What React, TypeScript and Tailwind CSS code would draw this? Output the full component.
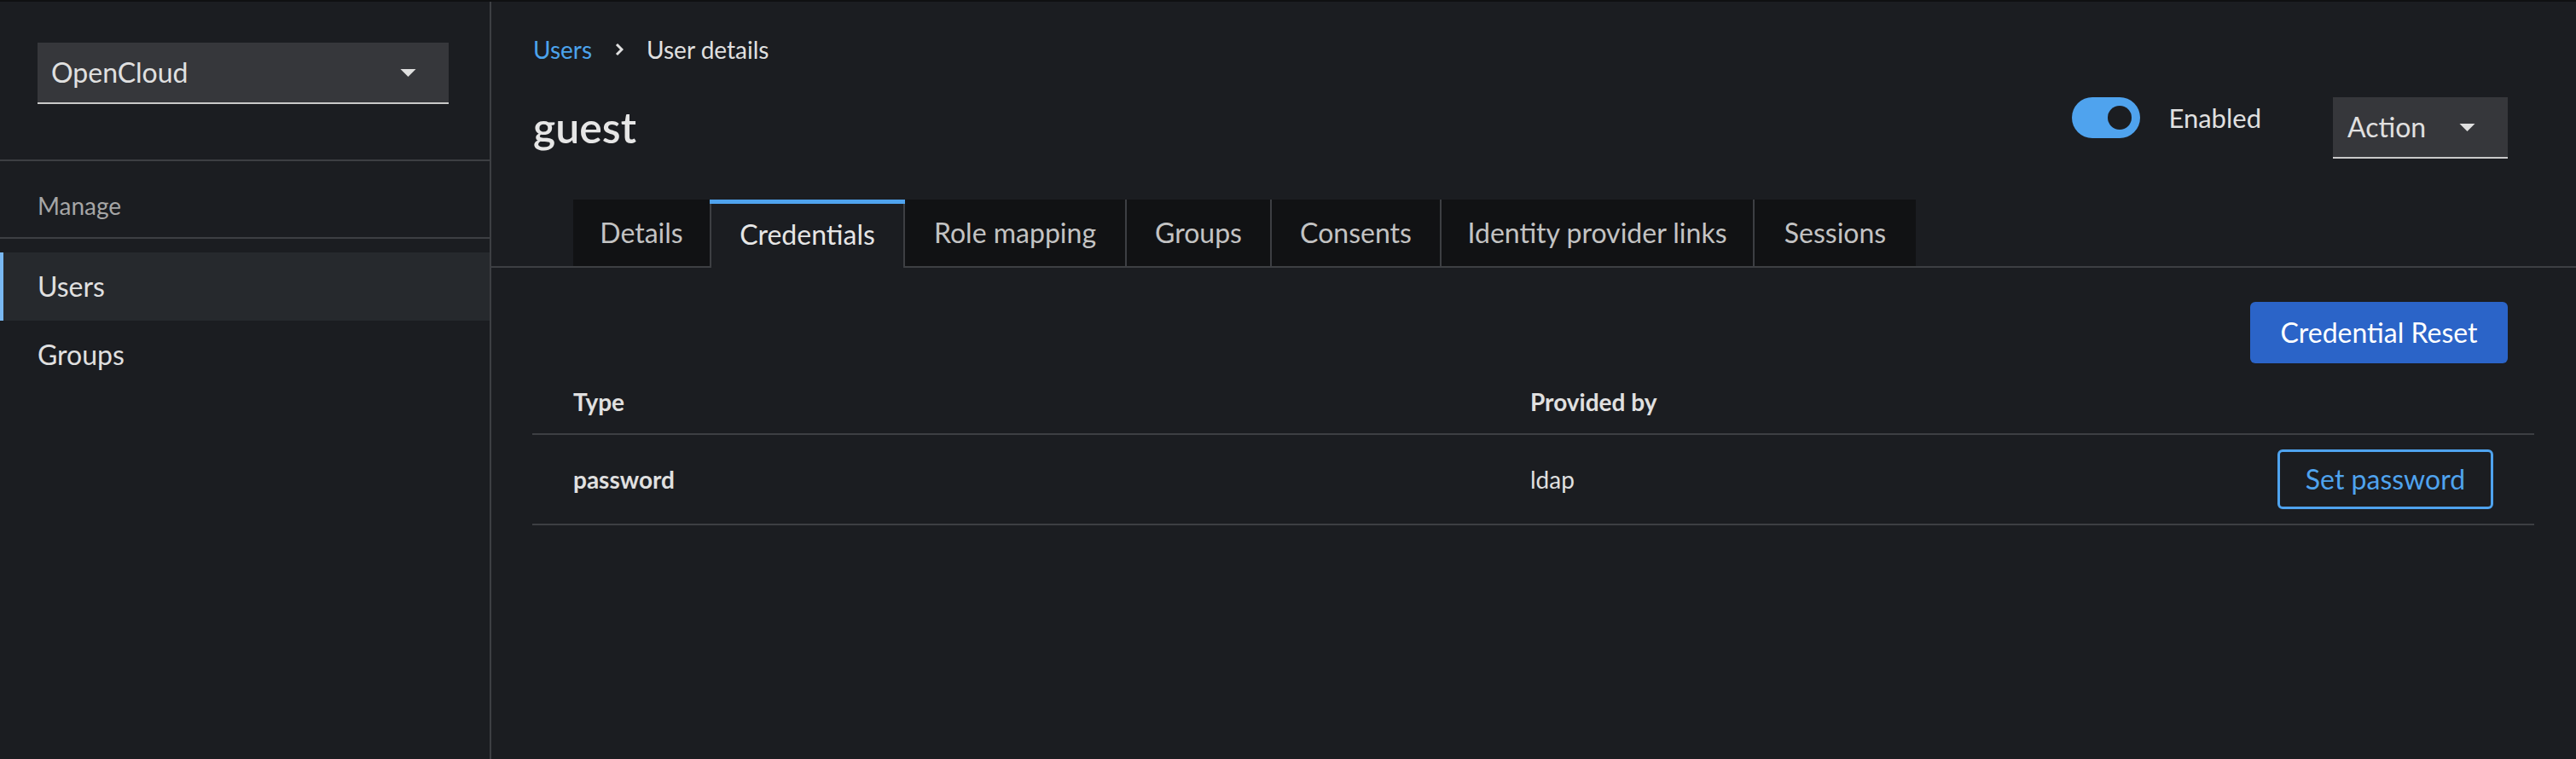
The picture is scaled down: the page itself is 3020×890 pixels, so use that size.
import React from 'react';

const CaretDown: React.FC<{ className?: string }> = ({ className }) => (
  <svg className={className} viewBox="0 0 20 10" fill="currentColor">
    <path d="M0 0 H20 L10 10 Z" />
  </svg>
);

const Sidebar: React.FC = () => (
  <aside className="w-[576px] shrink-0 border-r-2 border-[#3d3f43]">
    {/* realm picker */}
    <div className="pl-[44px] pt-[48px] pb-[65px]">
      <div className="flex h-[72px] w-[482px] items-center justify-between border-b-2 border-[#c9c9c9] bg-[#36373b] pl-4 pr-[38px] text-[32px]">
        <span>OpenCloud</span>
        <CaretDown className="h-[9px] w-[19px] text-[#e0e0e0]" />
      </div>
    </div>
    <div className="border-t-2 border-[#3d3f43] pl-[44px] pt-[32px] pb-[17px] text-[28px] leading-[40px] text-[#a6a6a6]">
      Manage
    </div>
    <nav className="border-t-2 border-[#3d3f43] pt-[16px] text-[32px]">
      <div className="flex h-[80px] items-center border-l-4 border-[#79b8f2] bg-[#26292d] pl-[40px]">
        Users
      </div>
      <div className="flex h-[80px] items-center border-l-4 border-transparent pl-[40px]">
        Groups
      </div>
    </nav>
  </aside>
);

const tabs = [
  { name: 'Details', cls: 'w-[160px]' },
  { name: 'Credentials', cls: 'w-[229px]', active: true },
  { name: 'Role mapping', cls: 'w-[258px]' },
  { name: 'Groups', cls: 'w-[170px] border-l-2' },
  { name: 'Consents', cls: 'w-[199px] border-l-2' },
  { name: 'Identity provider links', cls: 'w-[367px] border-l-2' },
  { name: 'Sessions', cls: 'w-[191px] border-l-2' },
];

const Tabs: React.FC = () => (
  <div className="flex border-b-2 border-[#3d3f43] pl-[96px] text-[32px]">
    {tabs.map((t) =>
      t.active ? (
        <div key={t.name} className={`-mb-[2px] flex h-[80px] flex-col ${t.cls}`}>
          <div className="h-[5px] bg-[#4fa3ee]" />
          <div className="flex flex-1 items-center justify-center border-x-2 border-[#3d3f43] bg-[#1b1d21] pb-[3px] text-[#e6e6e6]">
            {t.name}
          </div>
        </div>
      ) : (
        <div
          key={t.name}
          className={`flex h-[78px] items-center justify-center border-[#3d3f43] bg-[#111214] text-[#c3c3c3] ${t.cls}`}
        >
          {t.name}
        </div>
      )
    )}
  </div>
);

export default function App() {
  return (
    <div className="flex h-[890px] w-full border-t-2 border-[#0f1012] bg-[#1b1d21] font-['Lato',sans-serif] text-[#e0e0e0]">
      <Sidebar />
      <main className="min-w-0 flex-1">
        {/* header */}
        <div className="flex h-[232px] items-start justify-between pl-[49px] pr-[80px] pt-[36px]">
          <div>
            <div className="flex items-center text-[28px] leading-[40px]">
              <span className="text-[#4ca3ec]">Users</span>
              <svg className="mx-[27px] h-[16px] w-[10px]" viewBox="0 0 10 16" fill="none" stroke="#e0e0e0" strokeWidth="3">
                <path d="M2 2 L8 8 L2 14" />
              </svg>
              <span>User details</span>
            </div>
            <h1 className="mt-[43px] text-[50px] font-semibold leading-[56px] text-[#e6e6e6]">guest</h1>
          </div>
          <div className="mt-[76px] flex items-start">
            <div className="flex h-[48px] items-center">
              <div className="flex h-[48px] w-[80px] items-center justify-end rounded-full bg-[#4fa3ee] pr-[10px]">
                <div className="h-[28px] w-[28px] rounded-full bg-[#1b1d21]" />
              </div>
              <span className="ml-[33px] text-[31px]">Enabled</span>
            </div>
            <div className="ml-[84px] flex h-[72px] w-[205px] items-center justify-between border-b-2 border-[#c9c9c9] bg-[#36373b] pl-[17px] pr-[38px] text-[32px]">
              <span>Action</span>
              <CaretDown className="h-[9px] w-[19px] text-[#e0e0e0]" />
            </div>
          </div>
        </div>

        <Tabs />

        {/* credentials */}
        <div className="pl-[48px] pr-[49px]">
          <div className="flex justify-end pr-[31px] pt-[40px]">
            <button className="h-[72px] w-[302px] rounded-[6px] bg-[#2b64c8] text-[32px] text-white">
              Credential Reset
            </button>
          </div>
          <div className="flex h-[84px] items-center border-b-2 border-[#3d3f43] px-[48px] pt-[8px] text-[28px] font-bold">
            <div className="w-[1122px]">Type</div>
            <div className="flex-1">Provided by</div>
          </div>
          <div className="flex h-[106px] items-center border-b-2 border-[#3d3f43] px-[48px] text-[28px]">
            <div className="w-[1122px] font-bold">password</div>
            <div className="flex-1">ldap</div>
            <button className="h-[70px] w-[253px] rounded-[6px] border-[3px] border-[#4fa3ee] text-[32px] text-[#4fa3ee]">
              Set password
            </button>
          </div>
        </div>
      </main>
    </div>
  );
}
